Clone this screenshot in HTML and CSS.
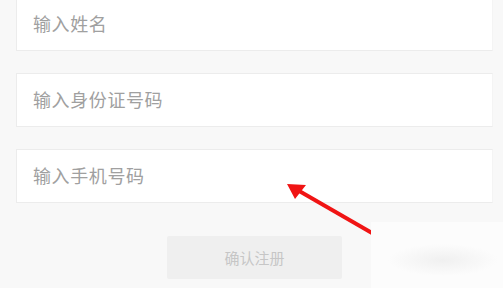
FILE: index.html
```html
<!DOCTYPE html>
<html lang="zh">
<head>
<meta charset="utf-8">
<link rel="stylesheet" href="styles.css">
</head>
<body>
<div class="form">
  <div class="field">输入姓名</div>
  <div class="field">输入身份证号码</div>
  <div class="field">输入手机号码</div>
  <div class="actions"><div class="btn">确认注册</div></div>
</div>
<svg class="arrow" width="100" height="60" viewBox="0 0 100 60">
  <line x1="92" y1="53" x2="14" y2="8" stroke="#f01414" stroke-width="4"/>
  <polygon points="7,4 26,5 15,19" fill="#f01414"/>
</svg>
<div class="mask"></div>
</body>
</html>
```
FILE: styles.css
```css
html, body {
  margin: 0;
  padding: 0;
}
body {
  width: 503px;
  height: 288px;
  overflow: hidden;
  background: #f8f8f8;
  font-family: "Noto Sans CJK SC", "Noto Sans", sans-serif;
  position: relative;
}
.form {
  margin-top: -3px;
  margin-left: 16px;
  width: 477px;
  display: flex;
  flex-direction: column;
  gap: 22px;
}
.field {
  box-sizing: border-box;
  height: 54px;
  background: #fff;
  border: 1px solid #ececec;
  border-right-color: #f4f4f4;
  padding-left: 16px;
  padding-bottom: 2px;
  display: flex;
  align-items: center;
  font-size: 18px;
  letter-spacing: 0.6px;
  color: #a0a0a0;
}
.actions {
  display: flex;
  justify-content: center;
  margin-top: 11px;
}
.btn {
  width: 175px;
  height: 43px;
  background: #efefef;
  border-radius: 2px;
  display: flex;
  align-items: center;
  justify-content: center;
  font-size: 15px;
  color: #c6c6c6;
}
.arrow {
  position: absolute;
  left: 280px;
  top: 180px;
}
.mask {
  position: absolute;
  left: 371px;
  top: 222px;
  width: 132px;
  height: 66px;
  background: radial-gradient(ellipse 55px 16px at 72px 38px, #f0f0f0, #fcfcfc);
}
```
